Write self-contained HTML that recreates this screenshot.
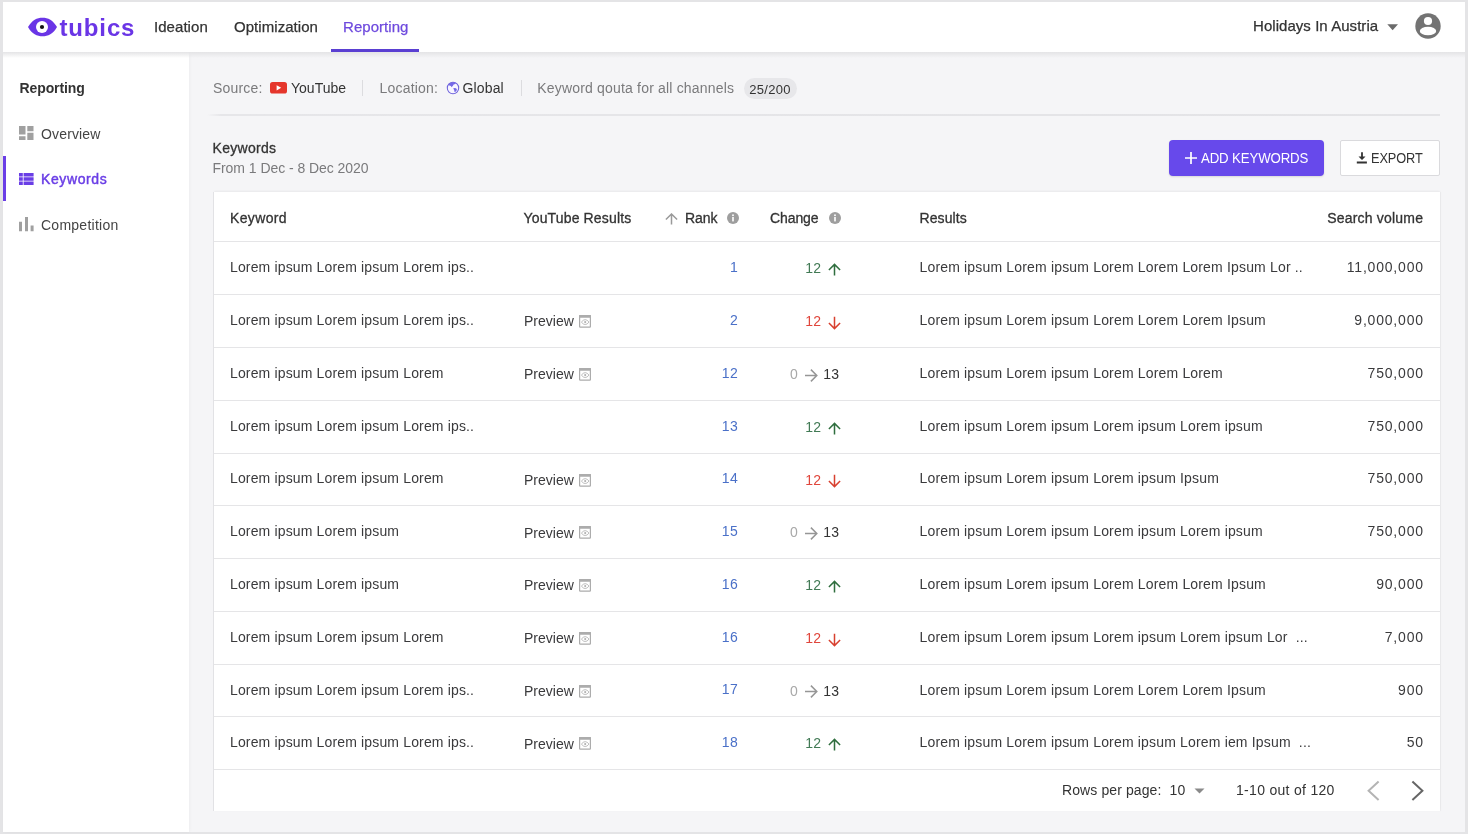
<!DOCTYPE html>
<html><head><meta charset="utf-8">
<style>
*{box-sizing:border-box;margin:0;padding:0}
html,body{width:1468px;height:834px;overflow:hidden}
body{font-family:"Liberation Sans",sans-serif;background:#e4e4e6;position:relative;color:#333}
.a,.t,svg{position:absolute}
.t{white-space:nowrap;font-size:14px;line-height:14px;color:#3a3a3c}
#main{position:absolute;left:3px;top:2px;width:1462px;height:830px;background:#f5f5f7}
#hdr{position:absolute;left:3px;top:2px;width:1462px;height:50px;background:#fff;z-index:1}
#hshadow{position:absolute;left:3px;top:52px;width:1462px;height:6px;background:linear-gradient(#e4e4e6,rgba(244,245,247,0));z-index:3}
#side{position:absolute;left:3px;top:52px;width:186px;height:780px;background:#fff;box-shadow:1px 0 3px rgba(0,0,0,.03)}
.nav{font-size:15px;line-height:15px;top:18.5px;color:#333;letter-spacing:0.05px;-webkit-text-stroke:0.25px currentColor}
.sb{left:41px;color:#444;letter-spacing:0.15px}
#tbl{position:absolute;left:214px;top:192px;width:1226px;height:619px;background:#fff;box-shadow:-1px 0 0 #e2e2e5,0 -1px 2px rgba(0,0,0,.05),1px 0 1px rgba(0,0,0,.03)}
.sep{position:absolute;left:214px;width:1226px;height:1px;background:#e5e5e7}
.hd{top:211.2px;letter-spacing:0.1px;color:#333;-webkit-text-stroke:0.3px #333}
.kw{left:230px;letter-spacing:0.15px}
.pv{left:524px;color:#3a3a3c}
.pvi{left:578.8px}
.rk{right:730px;color:#4a70c8;letter-spacing:0.3px}
.chg{right:646.5px;letter-spacing:0.4px}
.arr{left:828px}
.zero{left:790px;color:#a8a8a8;letter-spacing:0.3px}
.rarr{left:805.2px}
.thirteen{left:823.2px;color:#333;letter-spacing:0.4px}
.res{left:919.5px;letter-spacing:0.17px}
.vol{right:44.2px;letter-spacing:0.8px}

#wrap{position:absolute;left:0;top:0;width:1468px;height:834px;will-change:transform;overflow:hidden}

</style></head><body><div id="wrap">
<div id="main"></div>
<div id="side">
</div>
<div id="hdr">
</div>
<div id="hshadow"></div>
<!-- logo -->
<svg style="left:27px;top:17px;z-index:5" width="31" height="20" viewBox="0 0 31 20">
  <path d="M1 10C5 3 10 0.7 15.5 0.7S26 3 30 10C26 17 21 19.3 15.5 19.3S5 17 1 10Z" fill="#6a35e6"/>
  <circle cx="15" cy="10" r="6" fill="#fff"/>
  <circle cx="15" cy="10" r="2.1" fill="#111"/>
</svg>
<div class="t" style="left:59.5px;top:15.5px;font-size:24px;line-height:24px;font-weight:bold;color:#6a35e6;z-index:5;letter-spacing:0.85px">tubics</div>
<div class="t nav" style="left:154px;z-index:5">Ideation</div>
<div class="t nav" style="left:234px;z-index:5">Optimization</div>
<div class="t nav" style="left:343px;color:#6e4ade;z-index:5">Reporting</div>
<div class="a" style="left:331px;top:49px;width:88px;height:3px;background:#5a3fd2;z-index:5"></div>
<div class="t nav" style="left:1253px;top:18px;z-index:5">Holidays In Austria</div>
<svg style="left:1386.5px;top:23.5px;z-index:5" width="12" height="7" viewBox="0 0 12 7"><path d="M0.3 0.3H11L5.65 6.3Z" fill="#6b6b6b"/></svg>
<svg style="left:1415px;top:13px;z-index:5" width="26" height="26" viewBox="0 0 26 26"><circle cx="13" cy="13" r="12.7" fill="#737373"/><circle cx="13" cy="8" r="4.1" fill="#fff"/><ellipse cx="13" cy="18" rx="8.2" ry="4.3" fill="#fff"/></svg>
<!-- sidebar -->
<div class="t" style="left:19.5px;top:81.2px;font-weight:bold;color:#333;letter-spacing:-0.1px">Reporting</div>
<svg style="left:19px;top:126px" width="15" height="14" viewBox="0 0 15 14"><path d="M0 0h6.5v8.5H0zM8.3 0h6.2v5.2H8.3zM8.3 6.8h6.2v7.2H8.3zM0 10.2h6.5v3.8H0z" fill="#a0a0a0"/></svg>
<div class="t sb" style="top:126.6px">Overview</div>
<div class="a" style="left:3px;top:156px;width:3px;height:45px;background:#6a3ee6"></div>
<svg style="left:19px;top:173px" width="15" height="12" viewBox="0 0 15 12"><path d="M0 0h3.8v3.5H0zM4.6 0h10v3.5H4.6zM0 4.3h3.8v3.4H0zM4.6 4.3h10v3.4H4.6zM0 8.5h3.8v3.5H0zM4.6 8.5h10v3.5H4.6z" fill="#6a3ee6"/></svg>
<div class="t sb" style="top:172.4px;color:#6a3ee6;letter-spacing:0.6px;-webkit-text-stroke:0.45px #6a3ee6">Keywords</div>
<svg style="left:19px;top:217px" width="15" height="15" viewBox="0 0 15 15"><path d="M0 4.8h3v9.4H0zM6 0h3v14.2H6zM11.6 8.6h3v5.6h-3z" fill="#a0a0a0"/></svg>
<div class="t sb" style="top:218.2px;letter-spacing:0.25px">Competition</div>
<!-- source bar -->
<div class="t" style="left:213px;top:81px;color:#7a7a7c;letter-spacing:0.2px">Source:</div>
<svg style="left:270px;top:82px" width="17" height="12" viewBox="0 0 17 12"><rect x="0" y="0" width="17" height="11.5" rx="2.6" fill="#e5362c"/><path d="M6.6 3.2L11.2 5.8L6.6 8.4Z" fill="#fff"/></svg>
<div class="t" style="left:291px;top:81px;color:#333">YouTube</div>
<div class="a" style="left:362px;top:80px;width:1px;height:16px;background:#dcdcdf"></div>
<div class="t" style="left:379.5px;top:81px;color:#7a7a7c;letter-spacing:0.2px">Location:</div>
<svg style="left:446px;top:81px" width="14" height="14" viewBox="0 0 14 14"><circle cx="7" cy="7" r="5.7" fill="#f7f5ff" stroke="#6f63dc" stroke-width="1.05"/><path d="M2.4 4.1C3.4 2.4 5.2 1.3 7.2 1.3C8.3 1.3 9.2 1.6 10 2.1L8.6 3.2L7.6 3.4L6.9 4.7L5.6 6.3L4.9 5L3.4 4.6Z" fill="#7468e6"/><path d="M7.2 7.3L9.1 6.9L10.6 7.8L10.9 9.1L9.8 10.5L8.6 11.2L8.3 9.6Z" fill="#7468e6"/></svg>
<div class="t" style="left:462.5px;top:81px;color:#333;letter-spacing:0.15px">Global</div>
<div class="a" style="left:521px;top:80px;width:1px;height:16px;background:#dcdcdf"></div>
<div class="t" style="left:537.3px;top:81px;color:#7a7a7c;letter-spacing:0.18px">Keyword qouta for all channels</div>
<div class="a" style="left:743.5px;top:77.5px;width:53.5px;height:21px;border-radius:10.5px;background:#e7e7ea"></div>
<div class="t" style="left:749.3px;top:82.5px;font-size:13px;line-height:13px;color:#333;letter-spacing:0.3px">25/200</div>
<div class="a" style="left:207px;top:114px;width:1233px;height:1.5px;background:linear-gradient(90deg,rgba(228,228,231,0),#e6e6e9 14px,#e3e3e6)"></div>
<!-- title -->
<div class="t" style="left:212.5px;top:141px;color:#333;letter-spacing:0.3px;-webkit-text-stroke:0.3px #333">Keywords</div>
<div class="t" style="left:212.5px;top:161.2px;color:#7a7a7c;letter-spacing:-0.05px">From 1 Dec - 8 Dec 2020</div>
<!-- buttons -->
<div class="a" style="left:1168.5px;top:139.5px;width:155.5px;height:36.5px;border-radius:4px;background:#6749eb;box-shadow:0 1px 2px rgba(0,0,0,.12)"></div>
<svg style="left:1184.5px;top:152px" width="12" height="12" viewBox="0 0 12 12"><path d="M6 0V12M0 6H12" stroke="#fff" stroke-width="1.7"/></svg>
<div class="t" style="left:1200.5px;top:150.6px;color:#fff;font-size:14.4px;line-height:15px;letter-spacing:-0.15px;transform:scaleX(0.92);transform-origin:0 0">ADD KEYWORDS</div>
<div class="a" style="left:1340px;top:140px;width:100px;height:36px;background:#fff;border:1px solid #dadadd;border-radius:2px"></div>
<svg style="left:1355.5px;top:152px" width="12" height="12" viewBox="0 0 12 12"><path d="M5.1 0.2H6.9V4.4H9.5L6 7.9L2.5 4.4H5.1Z" fill="#333"/><rect x="0.8" y="9.5" width="10.1" height="2" fill="#333"/></svg>
<div class="t" style="left:1371px;top:151.2px;color:#333;font-size:14.2px;line-height:14px;letter-spacing:-0.1px;transform:scaleX(0.9);transform-origin:0 0">EXPORT</div>
<!-- table -->
<div id="tbl"></div>
<div class="t hd" style="left:230px;letter-spacing:0.35px">Keyword</div>
<div class="t hd" style="left:523.5px;letter-spacing:0.15px">YouTube Results</div>
<svg style="left:664.5px;top:212.5px" width="13" height="12" viewBox="0 0 13 12"><path d="M6.5 11.6V1.2M0.9 6.5L6.5 1L12.1 6.5" fill="none" stroke="#9a9a9a" stroke-width="1.5"/></svg>
<div class="t hd" style="left:685px;letter-spacing:-0.1px">Rank</div>
<svg style="left:727px;top:211.5px" width="12" height="12" viewBox="0 0 12 12"><circle cx="6" cy="6" r="6" fill="#9e9e9e"/><rect x="5.2" y="5" width="1.6" height="4.4" fill="#fff"/><circle cx="6" cy="3.3" r="0.95" fill="#fff"/></svg>
<div class="t hd" style="left:770px;letter-spacing:-0.1px">Change</div>
<svg style="left:828.5px;top:211.5px" width="12" height="12" viewBox="0 0 12 12"><circle cx="6" cy="6" r="6" fill="#9e9e9e"/><rect x="5.2" y="5" width="1.6" height="4.4" fill="#fff"/><circle cx="6" cy="3.3" r="0.95" fill="#fff"/></svg>
<div class="t hd" style="left:919.5px">Results</div>
<div class="t hd" style="right:44.8px;letter-spacing:0.2px">Search volume</div>
<!-- footer -->
<div class="t" style="left:1062px;top:783.2px;color:#333;letter-spacing:0.1px">Rows per page:</div>
<div class="t" style="left:1169.5px;top:783.2px;color:#333;letter-spacing:0.3px">10</div>
<svg style="left:1193.5px;top:787.5px" width="11" height="6" viewBox="0 0 11 6"><path d="M0.5 0.5H10.5L5.5 5.5Z" fill="#8a8a8a"/></svg>
<div class="t" style="left:1236px;top:783.2px;color:#333;letter-spacing:0.3px">1-10 out of 120</div>
<svg style="left:1366px;top:779.5px" width="15" height="21" viewBox="0 0 15 21"><path d="M12.6 1.5L2.6 10.8L12.6 20" fill="none" stroke="#b4b4b4" stroke-width="2"/></svg>
<svg style="left:1410px;top:779.5px" width="15" height="21" viewBox="0 0 15 21"><path d="M2.4 1.5L12.4 10.8L2.4 20" fill="none" stroke="#666" stroke-width="2"/></svg>

<div id="rows">
<div class="sep" style="top:241px"></div>
<div class="t kw" style="top:259.7px">Lorem ipsum Lorem ipsum Lorem ips..</div>
<div class="t rk" style="top:259.5px">1</div>
<div class="t chg" style="top:261.0px;color:#427a55">12</div>
<svg class="arr" style="top:262.8px" width="13" height="14" viewBox="0 0 13 14"><path d="M6.5 12.6V1.5M0.9 7L6.5 1.4L12.1 7" fill="none" stroke="#2f6e3e" stroke-width="1.5"/></svg>
<div class="t res" style="top:259.7px">Lorem ipsum Lorem ipsum Lorem Lorem Lorem Ipsum Lor ..</div>
<div class="t vol" style="top:259.7px">11,000,000</div>
<div class="sep" style="top:294px"></div>
<div class="t kw" style="top:312.7px">Lorem ipsum Lorem ipsum Lorem ips..</div>
<div class="t pv" style="top:314.2px">Preview</div>
<svg class="pvi" style="top:315.0px" width="12" height="13" viewBox="0 0 12 13"><rect x="0.6" y="0.6" width="10.8" height="11.6" rx="0.6" fill="#fff" stroke="#acacac" stroke-width="1.2"/><rect x="0" y="0" width="12" height="2.8" rx="0.6" fill="#acacac"/><path d="M2.4 7.1Q6.2 2.2 10 7.1Q6.2 12 2.4 7.1Z" fill="none" stroke="#b0b0b0" stroke-width="0.85"/><circle cx="6.2" cy="7.1" r="1.05" fill="#b0b0b0"/></svg>
<div class="t rk" style="top:312.5px">2</div>
<div class="t chg" style="top:314.0px;color:#e0463c">12</div>
<svg class="arr" style="top:315.8px" width="13" height="14" viewBox="0 0 13 14"><path d="M6.5 0.8V12.5M0.9 7L6.5 12.6L12.1 7" fill="none" stroke="#d8402f" stroke-width="1.5"/></svg>
<div class="t res" style="top:312.7px">Lorem ipsum Lorem ipsum Lorem Lorem Lorem Ipsum</div>
<div class="t vol" style="top:312.7px">9,000,000</div>
<div class="sep" style="top:347px"></div>
<div class="t kw" style="top:365.7px">Lorem ipsum Lorem ipsum Lorem</div>
<div class="t pv" style="top:367.2px">Preview</div>
<svg class="pvi" style="top:368.0px" width="12" height="13" viewBox="0 0 12 13"><rect x="0.6" y="0.6" width="10.8" height="11.6" rx="0.6" fill="#fff" stroke="#acacac" stroke-width="1.2"/><rect x="0" y="0" width="12" height="2.8" rx="0.6" fill="#acacac"/><path d="M2.4 7.1Q6.2 2.2 10 7.1Q6.2 12 2.4 7.1Z" fill="none" stroke="#b0b0b0" stroke-width="0.85"/><circle cx="6.2" cy="7.1" r="1.05" fill="#b0b0b0"/></svg>
<div class="t rk" style="top:365.5px">12</div>
<div class="t zero" style="top:367.0px">0</div>
<svg class="rarr" style="top:368.5px" width="13" height="13" viewBox="0 0 13 13"><path d="M0 6.5H11.6M5.9 0.6L11.8 6.5L5.9 12.4" fill="none" stroke="#969696" stroke-width="1.5"/></svg>
<div class="t thirteen" style="top:367.0px">13</div>
<div class="t res" style="top:365.7px">Lorem ipsum Lorem ipsum Lorem Lorem Lorem</div>
<div class="t vol" style="top:365.7px">750,000</div>
<div class="sep" style="top:400px"></div>
<div class="t kw" style="top:418.7px">Lorem ipsum Lorem ipsum Lorem ips..</div>
<div class="t rk" style="top:418.5px">13</div>
<div class="t chg" style="top:420.0px;color:#427a55">12</div>
<svg class="arr" style="top:421.8px" width="13" height="14" viewBox="0 0 13 14"><path d="M6.5 12.6V1.5M0.9 7L6.5 1.4L12.1 7" fill="none" stroke="#2f6e3e" stroke-width="1.5"/></svg>
<div class="t res" style="top:418.7px">Lorem ipsum Lorem ipsum Lorem ipsum Lorem ipsum</div>
<div class="t vol" style="top:418.7px">750,000</div>
<div class="sep" style="top:452.6px"></div>
<div class="t kw" style="top:471.3px">Lorem ipsum Lorem ipsum Lorem</div>
<div class="t pv" style="top:472.8px">Preview</div>
<svg class="pvi" style="top:473.6px" width="12" height="13" viewBox="0 0 12 13"><rect x="0.6" y="0.6" width="10.8" height="11.6" rx="0.6" fill="#fff" stroke="#acacac" stroke-width="1.2"/><rect x="0" y="0" width="12" height="2.8" rx="0.6" fill="#acacac"/><path d="M2.4 7.1Q6.2 2.2 10 7.1Q6.2 12 2.4 7.1Z" fill="none" stroke="#b0b0b0" stroke-width="0.85"/><circle cx="6.2" cy="7.1" r="1.05" fill="#b0b0b0"/></svg>
<div class="t rk" style="top:471.1px">14</div>
<div class="t chg" style="top:472.6px;color:#e0463c">12</div>
<svg class="arr" style="top:474.4px" width="13" height="14" viewBox="0 0 13 14"><path d="M6.5 0.8V12.5M0.9 7L6.5 12.6L12.1 7" fill="none" stroke="#d8402f" stroke-width="1.5"/></svg>
<div class="t res" style="top:471.3px">Lorem ipsum Lorem ipsum Lorem ipsum Ipsum</div>
<div class="t vol" style="top:471.3px">750,000</div>
<div class="sep" style="top:505.4px"></div>
<div class="t kw" style="top:524.1px">Lorem ipsum Lorem ipsum</div>
<div class="t pv" style="top:525.6px">Preview</div>
<svg class="pvi" style="top:526.4px" width="12" height="13" viewBox="0 0 12 13"><rect x="0.6" y="0.6" width="10.8" height="11.6" rx="0.6" fill="#fff" stroke="#acacac" stroke-width="1.2"/><rect x="0" y="0" width="12" height="2.8" rx="0.6" fill="#acacac"/><path d="M2.4 7.1Q6.2 2.2 10 7.1Q6.2 12 2.4 7.1Z" fill="none" stroke="#b0b0b0" stroke-width="0.85"/><circle cx="6.2" cy="7.1" r="1.05" fill="#b0b0b0"/></svg>
<div class="t rk" style="top:523.9px">15</div>
<div class="t zero" style="top:525.4px">0</div>
<svg class="rarr" style="top:526.9px" width="13" height="13" viewBox="0 0 13 13"><path d="M0 6.5H11.6M5.9 0.6L11.8 6.5L5.9 12.4" fill="none" stroke="#969696" stroke-width="1.5"/></svg>
<div class="t thirteen" style="top:525.4px">13</div>
<div class="t res" style="top:524.1px">Lorem ipsum Lorem ipsum Lorem ipsum Lorem ipsum</div>
<div class="t vol" style="top:524.1px">750,000</div>
<div class="sep" style="top:558.2px"></div>
<div class="t kw" style="top:576.9px">Lorem ipsum Lorem ipsum</div>
<div class="t pv" style="top:578.4px">Preview</div>
<svg class="pvi" style="top:579.2px" width="12" height="13" viewBox="0 0 12 13"><rect x="0.6" y="0.6" width="10.8" height="11.6" rx="0.6" fill="#fff" stroke="#acacac" stroke-width="1.2"/><rect x="0" y="0" width="12" height="2.8" rx="0.6" fill="#acacac"/><path d="M2.4 7.1Q6.2 2.2 10 7.1Q6.2 12 2.4 7.1Z" fill="none" stroke="#b0b0b0" stroke-width="0.85"/><circle cx="6.2" cy="7.1" r="1.05" fill="#b0b0b0"/></svg>
<div class="t rk" style="top:576.7px">16</div>
<div class="t chg" style="top:578.2px;color:#427a55">12</div>
<svg class="arr" style="top:580.0px" width="13" height="14" viewBox="0 0 13 14"><path d="M6.5 12.6V1.5M0.9 7L6.5 1.4L12.1 7" fill="none" stroke="#2f6e3e" stroke-width="1.5"/></svg>
<div class="t res" style="top:576.9px">Lorem ipsum Lorem ipsum Lorem Lorem Lorem Ipsum</div>
<div class="t vol" style="top:576.9px">90,000</div>
<div class="sep" style="top:611px"></div>
<div class="t kw" style="top:629.7px">Lorem ipsum Lorem ipsum Lorem</div>
<div class="t pv" style="top:631.2px">Preview</div>
<svg class="pvi" style="top:632.0px" width="12" height="13" viewBox="0 0 12 13"><rect x="0.6" y="0.6" width="10.8" height="11.6" rx="0.6" fill="#fff" stroke="#acacac" stroke-width="1.2"/><rect x="0" y="0" width="12" height="2.8" rx="0.6" fill="#acacac"/><path d="M2.4 7.1Q6.2 2.2 10 7.1Q6.2 12 2.4 7.1Z" fill="none" stroke="#b0b0b0" stroke-width="0.85"/><circle cx="6.2" cy="7.1" r="1.05" fill="#b0b0b0"/></svg>
<div class="t rk" style="top:629.5px">16</div>
<div class="t chg" style="top:631.0px;color:#e0463c">12</div>
<svg class="arr" style="top:632.8px" width="13" height="14" viewBox="0 0 13 14"><path d="M6.5 0.8V12.5M0.9 7L6.5 12.6L12.1 7" fill="none" stroke="#d8402f" stroke-width="1.5"/></svg>
<div class="t res" style="top:629.7px">Lorem ipsum Lorem ipsum Lorem ipsum Lorem ipsum Lor&nbsp; ...</div>
<div class="t vol" style="top:629.7px">7,000</div>
<div class="sep" style="top:663.8px"></div>
<div class="t kw" style="top:682.5px">Lorem ipsum Lorem ipsum Lorem ips..</div>
<div class="t pv" style="top:684.0px">Preview</div>
<svg class="pvi" style="top:684.8px" width="12" height="13" viewBox="0 0 12 13"><rect x="0.6" y="0.6" width="10.8" height="11.6" rx="0.6" fill="#fff" stroke="#acacac" stroke-width="1.2"/><rect x="0" y="0" width="12" height="2.8" rx="0.6" fill="#acacac"/><path d="M2.4 7.1Q6.2 2.2 10 7.1Q6.2 12 2.4 7.1Z" fill="none" stroke="#b0b0b0" stroke-width="0.85"/><circle cx="6.2" cy="7.1" r="1.05" fill="#b0b0b0"/></svg>
<div class="t rk" style="top:682.3px">17</div>
<div class="t zero" style="top:683.8px">0</div>
<svg class="rarr" style="top:685.3px" width="13" height="13" viewBox="0 0 13 13"><path d="M0 6.5H11.6M5.9 0.6L11.8 6.5L5.9 12.4" fill="none" stroke="#969696" stroke-width="1.5"/></svg>
<div class="t thirteen" style="top:683.8px">13</div>
<div class="t res" style="top:682.5px">Lorem ipsum Lorem ipsum Lorem Lorem Lorem Ipsum</div>
<div class="t vol" style="top:682.5px">900</div>
<div class="sep" style="top:716.4px"></div>
<div class="t kw" style="top:735.1px">Lorem ipsum Lorem ipsum Lorem ips..</div>
<div class="t pv" style="top:736.6px">Preview</div>
<svg class="pvi" style="top:737.4px" width="12" height="13" viewBox="0 0 12 13"><rect x="0.6" y="0.6" width="10.8" height="11.6" rx="0.6" fill="#fff" stroke="#acacac" stroke-width="1.2"/><rect x="0" y="0" width="12" height="2.8" rx="0.6" fill="#acacac"/><path d="M2.4 7.1Q6.2 2.2 10 7.1Q6.2 12 2.4 7.1Z" fill="none" stroke="#b0b0b0" stroke-width="0.85"/><circle cx="6.2" cy="7.1" r="1.05" fill="#b0b0b0"/></svg>
<div class="t rk" style="top:734.9px">18</div>
<div class="t chg" style="top:736.4px;color:#427a55">12</div>
<svg class="arr" style="top:738.2px" width="13" height="14" viewBox="0 0 13 14"><path d="M6.5 12.6V1.5M0.9 7L6.5 1.4L12.1 7" fill="none" stroke="#2f6e3e" stroke-width="1.5"/></svg>
<div class="t res" style="top:735.1px">Lorem ipsum Lorem ipsum Lorem ipsum Lorem iem Ipsum&nbsp; ...</div>
<div class="t vol" style="top:735.1px">50</div>
<div class="sep" style="top:769px"></div>
</div>
</div></body></html>
